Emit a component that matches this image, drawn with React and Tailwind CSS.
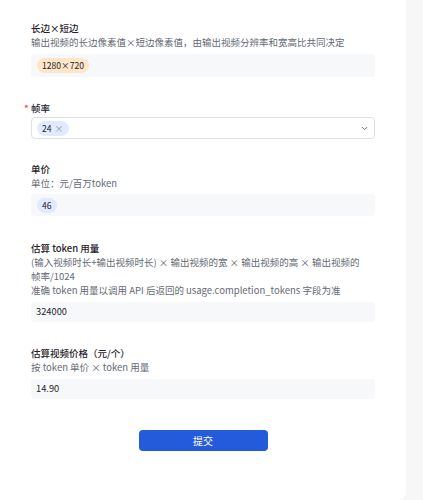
import React from "react";

const FONT = { fontFamily: '"Noto Sans CJK SC", "Noto Sans", sans-serif' };

function Field({ label, required, desc, children, className = "" }) {
  return (
    <div className={`flex flex-col ${className}`}>
      <div className="relative text-[9.5px] leading-[14px] font-medium text-[#1f2329]">
        {required && (
          <span className="absolute -left-[7px] top-0 text-[#f54a45]">*</span>
        )}
        {label}
      </div>
      {desc && (
        <div className="text-[9.5px] leading-[14px] text-[#646a73]">{desc}</div>
      )}
      {children}
    </div>
  );
}

function Tag({ children, tone = "blue", closable }) {
  const bg = tone === "orange" ? "bg-[#fde6c9]" : "bg-[#e1eaff]";
  return (
    <span
      className={`inline-flex items-center gap-[3px] h-[15px] px-[5px] rounded-full ${bg} text-[8.6px] text-[#1f2329]`}
    >
      {children}
      {closable && <span className="text-[#8f959e] text-[9px] leading-none">×</span>}
    </span>
  );
}

export default function App() {
  return (
    <div className="flex w-[423px] h-[500px] bg-[#f7f7f8]" style={FONT}>
      <div className="w-[406px] h-[500px] bg-white rounded-br-lg flex flex-col pl-[31px] pr-[31px] pt-[21px]">
        <Field
          label="长边×短边"
          desc="输出视频的长边像素值×短边像素值，由输出视频分辨率和宽高比共同决定"
        >
          <div className="mt-[5px] h-[23px] rounded bg-[#f7f8fa] flex items-center px-[6px]">
            <Tag tone="orange">1280×720</Tag>
          </div>
        </Field>

        <Field label="帧率" required className="mt-[24px]">
          <div className="mt-[2px] h-[22px] rounded border border-[#dee0e3] bg-white flex items-center justify-between pl-[5px] pr-[5px]">
            <Tag closable>24</Tag>
            <svg width="9" height="9" viewBox="0 0 24 24" fill="none" stroke="#646a73" strokeWidth="2.5" strokeLinecap="round" strokeLinejoin="round">
              <path d="M6 9l6 6 6-6" />
            </svg>
          </div>
        </Field>

        <Field label="单价" desc="单位：元/百万token" className="mt-[23px]">
          <div className="mt-[4px] h-[22px] rounded bg-[#f7f8fa] flex items-center px-[6px]">
            <Tag>46</Tag>
          </div>
        </Field>

        <Field
          label="估算 token 用量"
          desc={
            <>
              <div className="pr-[12px]">(输入视频时长+输出视频时长) × 输出视频的宽 × 输出视频的高 × 输出视频的帧率/1024</div>
              <div>准确 token 用量以调用 API 后返回的 usage.completion_tokens 字段为准</div>
            </>
          }
          className="mt-[25px]"
        >
          <div className="mt-[5px] h-[20px] rounded bg-[#f7f8fa] flex items-center px-[5px] text-[9.3px] text-[#1f2329]">
            324000
          </div>
        </Field>

        <Field label="估算视频价格（元/个）" desc="按 token 单价 × token 用量" className="mt-[24px]">
          <div className="mt-[5px] h-[20px] rounded bg-[#f7f8fa] flex items-center px-[5px] text-[9.3px] text-[#1f2329]">
            14.90
          </div>
        </Field>

        <div className="flex justify-center mt-[31px]">
          <button className="w-[129px] h-[21px] rounded bg-[#245bdb] text-white text-[10px] flex items-center justify-center">
            提交
          </button>
        </div>
      </div>
    </div>
  );
}
